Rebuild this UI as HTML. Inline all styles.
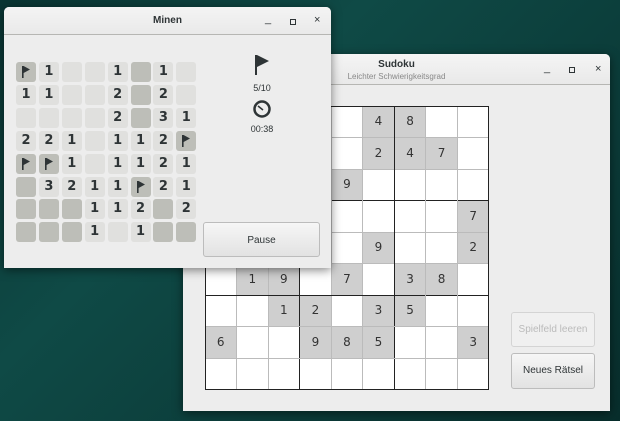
<!DOCTYPE html>
<html><head><meta charset="utf-8"><style>
*{margin:0;padding:0;box-sizing:border-box}
body{width:620px;height:421px;overflow:hidden;position:relative;font-family:"Liberation Sans",sans-serif;
background:linear-gradient(135deg,#0a3533 0%,#0f4a46 35%,#0c3f3c 60%,#082e2c 100%);}
.win{position:absolute;background:#ededed;border-radius:5px 5px 0 0;box-shadow:0 2px 10px rgba(0,0,0,.5)}
.hdr{position:absolute;left:0;right:0;top:0;background:linear-gradient(#f4f4f4,#e9e9e9);border-bottom:1px solid #b6b6b3;border-radius:5px 5px 0 0}
.ctl{position:absolute;font-size:11px;color:#2e3436}
.c{position:absolute;width:20px;height:20px;border-radius:3px;background:#e0e0de;color:#2e3436;font-weight:bold;font-size:13px;text-align:center;line-height:20px;font-family:"DejaVu Sans","Liberation Sans",sans-serif}
.u{background:#bdbeb8}
.s{position:absolute;width:31.5px;height:31.5px;text-align:center;line-height:31px;font-size:12px;color:#333;font-family:"DejaVu Sans",sans-serif}
.g{background:#cfcfcf}
.btn{position:absolute;border:1px solid #bcbcbc;border-radius:3px;background:linear-gradient(#f6f6f6,#e2e2e2);font-size:10px;text-align:center;color:#2e3436}
</style></head><body>
<div class="win" style="left:183px;top:54px;width:427px;height:357px">
 <div class="hdr" style="height:31px">
  <div style="position:absolute;left:0;right:0;top:5px;text-align:center;font-size:10px;font-weight:bold;color:#2e3436">Sudoku</div>
  <div style="position:absolute;left:0;right:0;top:18px;text-align:center;font-size:8px;color:#888">Leichter Schwierigkeitsgrad</div>
  <div class="ctl" style="left:361px;top:8px">_</div>
  <div style="position:absolute;left:386px;top:13px;width:6px;height:6px;border:1.5px solid #2e3436"></div>
  <div class="ctl" style="left:412px;top:9px;font-size:11px">×</div>
 </div>
 <div class="btn" style="left:328px;top:258px;width:84px;height:35px;line-height:33px;color:#bbb;background:#f0f0f0;border-color:#d4d4d4">Spielfeld leeren</div>
 <div class="btn" style="left:328px;top:299px;width:84px;height:36px;line-height:34px">Neues Rätsel</div>
</div>
<div id="sg" style="position:absolute;left:205px;top:106px;width:284px;height:284px;background:#fff">
</div>
<div class="win" style="left:4px;top:7px;width:327px;height:261px">
 <div class="hdr" style="height:28px">
  <div style="position:absolute;left:0;right:0;top:8px;text-align:center;font-size:10px;font-weight:bold;color:#2e3436">Minen</div>
  <div class="ctl" style="left:261px;top:6px">_</div>
  <div style="position:absolute;left:286px;top:12px;width:6px;height:6px;border:1.5px solid #2e3436"></div>
  <div class="ctl" style="left:310px;top:7px">×</div>
 </div>
 <svg style="position:absolute;left:249px;top:47px" width="18" height="22" viewBox="0 0 18 22"><path d="M2 1h2v20H2z M4 1L16 7L4 13z" fill="#2e3436"/></svg>
 <div style="position:absolute;left:238px;top:76px;width:40px;text-align:center;font-size:9px;color:#2e3436">5/10</div>
 <svg style="position:absolute;left:248px;top:92px" width="20" height="20"><circle cx="10" cy="10" r="7.5" fill="none" stroke="#2e3436" stroke-width="2.5"/><path d="M6 7l5 4" stroke="#2e3436" stroke-width="1.5"/></svg>
 <div style="position:absolute;left:234px;top:117px;width:48px;text-align:center;font-size:9px;color:#2e3436">00:38</div>
 <div class="btn" style="left:199px;top:215px;width:117px;height:35px;line-height:35px">Pause</div>
</div>
<div id="mg"></div>
<script>
var b=["F1__1U1_","11__2U2_","____2U31","221_112F","FF1_1121","U3211F21","UUU112U2","UUU1_1UU"];
var h="";
var flag='<svg width="20" height="20" viewBox="0 0 20 20"><path d="M6 4h1.6v12H6z M7.6 4L14 7.5L7.6 11z" fill="#2e3436"/></svg>';
for(var r=0;r<8;r++)for(var c=0;c<8;c++){var ch=b[r][c];var x=16+c*22.9,y=62+r*22.9;
var cls="c"+((ch=="U"||ch=="F")?" u":"");var t=(ch=="F")?flag:(ch=="U"||ch=="_")?"":ch;
h+='<div class="'+cls+'" style="left:'+x+'px;top:'+y+'px">'+t+'</div>';}
document.getElementById("mg").innerHTML=h;
var s=["_____48__","_____247_","____9____","________7","_____9__2","_19_7_38_","__12_35__","6__985__3","_________"];
var g="";
for(var r=0;r<9;r++)for(var c=0;c<9;c++){var ch=s[r][c];
g+='<div class="s'+(ch!="_"?" g":"")+'" style="left:'+(c*31.55)+'px;top:'+(r*31.55)+'px">'+(ch!="_"?ch:"")+'</div>';}
for(var i=1;i<9;i++){var th=(i%3==0);var col=th?"#222":"#bbb";
g+='<div style="position:absolute;left:'+(i*31.55-0.5)+'px;top:0;width:1px;height:284px;background:'+col+'"></div>';
g+='<div style="position:absolute;top:'+(i*31.55-0.5)+'px;left:0;height:1px;width:284px;background:'+col+'"></div>';}
g+='<div style="position:absolute;left:0;top:0;width:284px;height:284px;border:1px solid #222"></div>';
document.getElementById("sg").innerHTML=g;
</script>
</body></html>
